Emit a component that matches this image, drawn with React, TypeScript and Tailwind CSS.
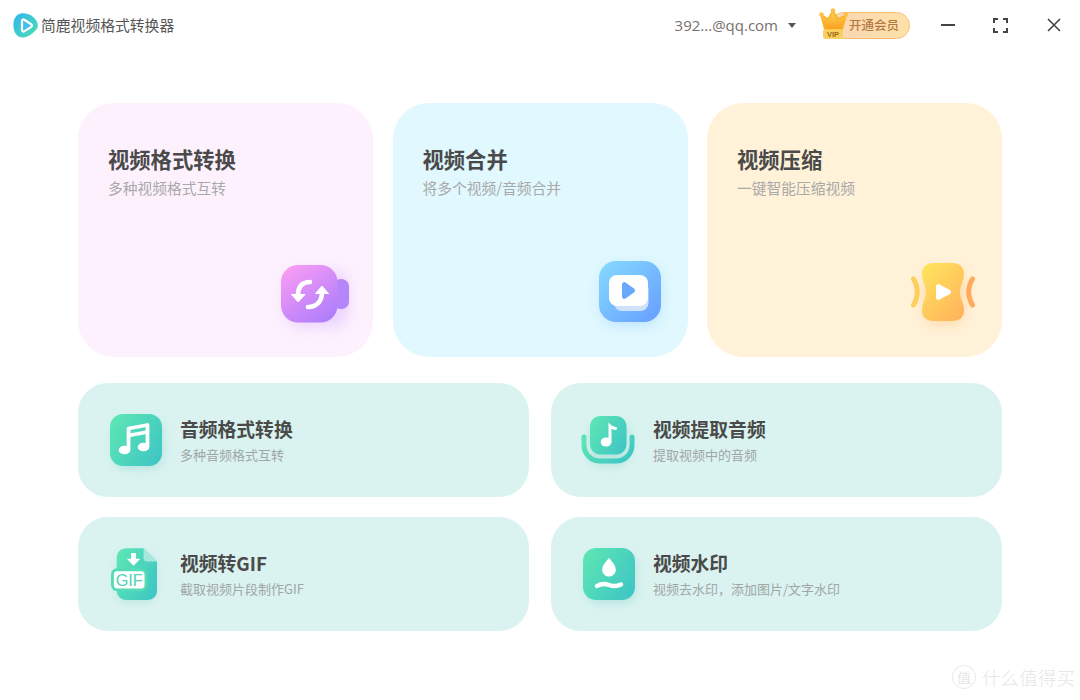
import { ReactNode } from "react";

const CamIcon = () => (
    <svg width="69" height="58" viewBox="0 0 69 58" className="overflow-visible">
        <defs>
            <linearGradient id="camG" x1="0.1" y1="0" x2="0.8" y2="1">
                <stop offset="0" stopColor="#fb9df4" />
                <stop offset="1" stopColor="#ae7dfb" />
            </linearGradient>
            <filter id="camS" x="-40%" y="-40%" width="180%" height="180%">
                <feGaussianBlur stdDeviation="7" />
            </filter>
        </defs>
        <rect x="5" y="6" width="62" height="56" rx="16" fill="#c79af8" opacity="0.35" filter="url(#camS)" />
        <path d="M50 18l7-3.500c5-2 11 1 11 7v15c0 6-6 9-11 7l-7-3.500z" fill="#b585fa" />
        <rect x="0" y="0" width="56.500" height="57.500" rx="17" fill="url(#camG)" />
        <path d="M29 17C22 17 17.500 21 17 29" fill="none" stroke="#fff" strokeWidth="4.600" strokeLinecap="round" />
        <path d="M10.500 29.500h13.500l-6.800 7.500z" fill="#fff" stroke="#fff" strokeWidth="1" strokeLinejoin="round" />
        <path d="M27 42c8 0 13.500-5 14-14" fill="none" stroke="#fff" strokeWidth="4.600" strokeLinecap="round" />
        <path d="M34.500 28.500h13l-6.500-7.500z" fill="#fff" stroke="#fff" strokeWidth="1" strokeLinejoin="round" />
    </svg>
);

const PlayBoxIcon = () => (
    <svg width="62" height="62" viewBox="0 0 62 62" className="overflow-visible">
        <defs>
            <linearGradient id="boxG" x1="0" y1="0" x2="1" y2="1">
                <stop offset="0" stopColor="#86dcff" />
                <stop offset="1" stopColor="#669dff" />
            </linearGradient>
            <filter id="boxS" x="-40%" y="-40%" width="180%" height="180%">
                <feGaussianBlur stdDeviation="6" />
            </filter>
        </defs>
        <rect x="2" y="5" width="60" height="60" rx="18" fill="#8cc8ff" opacity="0.4" filter="url(#boxS)" />
        <rect x="0" y="0" width="62" height="61" rx="17" fill="url(#boxG)" />
        <rect x="15" y="20" width="34.500" height="30" rx="8" fill="#cfe2fd" />
        <rect x="10" y="14" width="39" height="31" rx="8" fill="#fff" />
        <path d="M23 23.500c0-2 2-3 3.500-2l8.500 6c1.500 1 1.500 3 0 4l-8.500 6c-1.500 1-3.500 0-3.500-2z" fill="#6aa8fb" />
    </svg>
);

const CompressIcon = () => (
    <svg width="64" height="58" viewBox="0 0 64 58" className="overflow-visible">
        <defs>
            <linearGradient id="cmpG" x1="0.1" y1="0" x2="0.9" y2="1">
                <stop offset="0" stopColor="#ffe35c" />
                <stop offset="1" stopColor="#ffb35c" />
            </linearGradient>
            <filter id="cmpS" x="-50%" y="-40%" width="200%" height="180%">
                <feGaussianBlur stdDeviation="6" />
            </filter>
        </defs>
        <rect x="12" y="6" width="42" height="56" rx="14" fill="#ffb96a" opacity="0.4" filter="url(#cmpS)" />
        <path d="M23 0h18c8 0 12 4 12 11 0 7-4 11-4 18s4 11 4 18c0 7-4 11-12 11H23c-8 0-12-4-12-11 0-7 4-11 4-18s-4-11-4-18c0-7 4-11 12-11z" fill="url(#cmpG)" />
        <path d="M2.500 16c5 8 5 18 0 26" fill="none" stroke="#ffcf5e" strokeWidth="5" strokeLinecap="round" />
        <path d="M61.500 16c-5 8-5 18 0 26" fill="none" stroke="#ffab5a" strokeWidth="5" strokeLinecap="round" />
        <path d="M25 23.500c0-2 2-3 3.500-2l10.500 5.500c1.500 1 1.500 3 0 4l-10.500 5.500c-1.500 1-3.500 0-3.500-2z" fill="#fff" />
    </svg>
);

const TealDefs = ({ id }: { id: string }) => (
    <defs>
        <linearGradient id={id} x1="0" y1="0.2" x2="1" y2="0.8">
            <stop offset="0" stopColor="#5ce5b4" />
            <stop offset="1" stopColor="#3fc6c4" />
        </linearGradient>
        <filter id={id + "S"} x="-40%" y="-40%" width="180%" height="180%">
            <feGaussianBlur stdDeviation="5" />
        </filter>
    </defs>
);

const MusicIcon = () => (
    <svg width="52" height="52" viewBox="0 0 52 52" className="overflow-visible">
        <TealDefs id="musG" />
        <rect x="3" y="5" width="50" height="50" rx="13" fill="#6fc9c2" opacity="0.35" filter="url(#musGS)" />
        <rect width="52" height="52" rx="13" fill="url(#musG)" />
        <path d="M18.500 36V14.500l19-3.500V33" fill="none" stroke="#fff" strokeWidth="3.800" strokeLinejoin="round" />
        <path d="M18.500 21.500l19-3.500" fill="none" stroke="#fff" strokeWidth="3.800" />
        <ellipse cx="14.500" cy="36" rx="5.800" ry="4.300" fill="#fff" />
        <ellipse cx="33.500" cy="33" rx="5.800" ry="4.300" fill="#fff" />
    </svg>
);

const ExtractIcon = () => (
    <svg width="54" height="48" viewBox="0 0 54 48" className="overflow-visible">
        <TealDefs id="extG" />
        <rect x="8" y="6" width="40" height="44" rx="12" fill="#6fc9c2" opacity="0.3" filter="url(#extGS)" />
        <path d="M3 21v8c0 9 7 16 16 16h16c9 0 16-7 16-16v-8" fill="none" stroke="url(#extG)" strokeWidth="5" strokeLinecap="round" />
        <rect x="9" y="0" width="36.500" height="38.500" rx="10" fill="url(#extG)" />
        <path d="M29 26V10c1.500 1.500 4 2 5.500 2.500" fill="none" stroke="#fff" strokeWidth="3" strokeLinecap="round" />
        <ellipse cx="25" cy="26" rx="5.300" ry="4.600" fill="#fff" />
    </svg>
);

const GifIcon = () => (
    <svg width="46" height="52" viewBox="0 0 48 54" className="overflow-visible">
        <TealDefs id="gifG" />
        <rect x="6" y="6" width="40" height="50" rx="10" fill="#6fc9c2" opacity="0.3" filter="url(#gifGS)" />
        <path d="M16 0h18l14 14v30c0 6-4 10-10 10H16c-6 0-10-4-10-10V10C6 4 10 0 16 0z" fill="url(#gifG)" />
        <path d="M34 0l14 14H38c-3 0-4-2-4-4z" fill="#a7e8dd" />
        <path d="M21 5h5v6h4.500l-7 7.500-7-7.500H21z" fill="#fff" />
        <rect x="1.500" y="22.500" width="35" height="21" rx="5" fill="#fff" stroke="#55dcb6" strokeWidth="3" />
        <text x="19" y="39" textAnchor="middle" fontFamily="'Liberation Sans', sans-serif" fontSize="17" fill="#4fd3b6">GIF</text>
    </svg>
);

const DropIcon = () => (
    <svg width="52" height="52" viewBox="0 0 52 52" className="overflow-visible">
        <TealDefs id="drpG" />
        <rect x="3" y="5" width="50" height="50" rx="13" fill="#6fc9c2" opacity="0.35" filter="url(#drpGS)" />
        <rect width="52" height="52" rx="13" fill="url(#drpG)" />
        <path d="M26 10c3 3.500 6.800 7.500 6.800 11.700 0 3.800-3 6.800-6.800 6.800s-6.800-3-6.800-6.800C19.200 17.500 23 13.500 26 10z" fill="#fff" />
        <path d="M14 38c4-2.500 8-2.500 12-1s8 1.500 12-0.500" fill="none" stroke="#fff" strokeWidth="4.400" strokeLinecap="round" />
    </svg>
);

const LargeCard = ({ title, sub, bg, icon, iconBox }: { title: string; sub: string; bg: string; icon: ReactNode; iconBox: string }) => (
    <div className={"flex h-[254px] flex-col justify-between rounded-[36px] pl-[30px] " + bg}>
        <div className="pt-[41px]">
            <div className="text-[21.300px] leading-[30px] font-bold text-[#4a4a4a]">{title}</div>
            <div className="mt-[3px] text-[14.750px] leading-[22px] text-[#a9a9a9]">{sub}</div>
        </div>
        <div className={"self-end " + iconBox}>{icon}</div>
    </div>
);

const SmallCard = ({ title, sub, icon, iconBox }: { title: string; sub: string; icon: ReactNode; iconBox: string }) => (
    <div className="flex h-[114px] items-center rounded-[30px] bg-[#daf3f0]">
        <div className={"flex items-center justify-center " + iconBox}>{icon}</div>
        <div>
            <div className="text-[18.800px] leading-[28px] font-bold text-[#4a4a4a]">{title}</div>
            <div className="mt-[2px] text-[13px] leading-[20px] text-[#a0a6a5]">{sub}</div>
        </div>
    </div>
);

export default function App() {
    return (
        <div className="relative h-[700px] w-[1080px] overflow-hidden bg-white font-['Noto_Sans_CJK_SC','Microsoft_YaHei',sans-serif]">
            <header className="flex h-[50px] items-center pl-[13px]">
                <svg width="25" height="25" viewBox="0 0 25 25">
                    <defs>
                        <linearGradient id="logoG" x1="0" y1="0" x2="1" y2="1">
                            <stop offset="0" stopColor="#2fb5f0" />
                            <stop offset="1" stopColor="#4fe0b0" />
                        </linearGradient>
                    </defs>
                    <path d="M8 0.500C15 -0.500 22 4 24 9c1.500 3.500 1 6-1.500 8.500C19 21 15 24 10.500 24.500 5 25 1 20.500 0.500 14 0 7 2.500 1.500 8 0.500z" fill="url(#logoG)" />
                    <path d="M9 8c0-1.200 1.100-1.900 2.200-1.300l7 4.500c1 0.700 1 2 0 2.700l-7 4.500C10.100 19 9 18.300 9 17z" fill="#3fc0ef" stroke="#fff" strokeWidth="2.200" strokeLinejoin="round" />
                </svg>
                <span className="ml-[3px] text-[14.800px] text-[#555]">简鹿视频格式转换器</span>
                <div className="ml-auto flex items-center">
                    <span className="font-['Open_Sans',sans-serif] text-[15px] text-[#77706c]">392...@qq.com</span>
                    <svg width="8" height="5" viewBox="0 0 8 5" className="mr-[34px] ml-[10px]">
                        <path d="M0 0h8L4 5z" fill="#555" />
                    </svg>
                    <div className="relative mr-[31px] flex h-[27px] w-[80px] items-center justify-end rounded-full border border-[#fdbb6f] bg-gradient-to-r from-[#fbd5b5] to-[#fee2a8] pr-[10px]">
                        <span className="text-[12.500px] font-medium text-[#b5793f]">开通会员</span>
                        <svg width="30" height="32" viewBox="0 0 30 32" className="absolute -top-[5px] -left-[12px]">
                            <defs>
                                <linearGradient id="crownG" x1="0" y1="0" x2="0" y2="1">
                                    <stop offset="0" stopColor="#fdd35a" />
                                    <stop offset="1" stopColor="#f99e1b" />
                                </linearGradient>
                            </defs>
                            <path d="M2 7l7 4 5-8 5 8 8-4-4 15H6z" fill="url(#crownG)" stroke="#fbb321" strokeWidth="1.500" strokeLinejoin="round" />
                            <circle cx="2.500" cy="6.500" r="2.300" fill="#fdc04a" />
                            <circle cx="14" cy="2.500" r="2.300" fill="#fdc04a" />
                            <circle cx="27" cy="6.500" r="2.300" fill="#fdc04a" />
                            <rect x="4" y="21" width="20" height="10" rx="3" fill="#f9cf5e" />
                            <text x="14" y="29" textAnchor="middle" fontFamily="'Liberation Sans', sans-serif" fontSize="7.500" fontWeight="700" fill="#9b6a1b">VIP</text>
                        </svg>
                    </div>
                    <svg width="14" height="2" viewBox="0 0 14 2" className="mr-[38px]">
                        <rect width="14" height="2" fill="#444" />
                    </svg>
                    <svg width="15" height="15" viewBox="0 0 15 15" className="mr-[39px]" fill="none" stroke="#444" strokeWidth="2">
                        <path d="M1 5V1h4M10 1h4v4M14 10v4h-4M5 14H1v-4" />
                    </svg>
                    <svg width="14" height="14" viewBox="0 0 14 14" className="mr-[19px]" fill="none" stroke="#444" strokeWidth="1.600">
                        <path d="M1 1l12 12M13 1L1 13" />
                    </svg>
                </div>
            </header>
            <main className="px-[78px] pt-[53px]">
                <div className="grid grid-cols-3 gap-[19.500px]">
                    <LargeCard title="视频格式转换" sub="多种视频格式互转" bg="bg-[#fdf1fe]" icon={<CamIcon />} iconBox="mr-[23px] mb-[34px]" />
                    <LargeCard title="视频合并" sub="将多个视频/音频合并" bg="bg-[#e0f8fe]" icon={<PlayBoxIcon />} iconBox="mr-[27px] mb-[34px]" />
                    <LargeCard title="视频压缩" sub="一键智能压缩视频" bg="bg-[#fff2d9]" icon={<CompressIcon />} iconBox="mr-[27px] mb-[36px]" />
                </div>
                <div className="mt-[26px] grid grid-cols-2 gap-x-[22px] gap-y-[20px]">
                    <SmallCard title="音频格式转换" sub="多种音频格式互转" icon={<MusicIcon />} iconBox="w-[102px] pl-[13px]" />
                    <SmallCard title="视频提取音频" sub="提取视频中的音频" icon={<ExtractIcon />} iconBox="w-[102px] pl-[12px]" />
                    <SmallCard title="视频转GIF" sub="截取视频片段制作GIF" icon={<GifIcon />} iconBox="w-[102px] pl-[9px]" />
                    <SmallCard title="视频水印" sub="视频去水印，添加图片/文字水印" icon={<DropIcon />} iconBox="w-[102px] pl-[13px]" />
                </div>
            </main>
            <div className="absolute right-[5px] bottom-[11px] flex items-center gap-[6px] text-[#e6e6e6]">
                <span className="flex h-[24px] w-[24px] items-center justify-center rounded-full border border-[#e9e9e9] text-[14px]">值</span>
                <span className="text-[18.600px] leading-none font-light">什么值得买</span>
            </div>
        </div>
    );
}
